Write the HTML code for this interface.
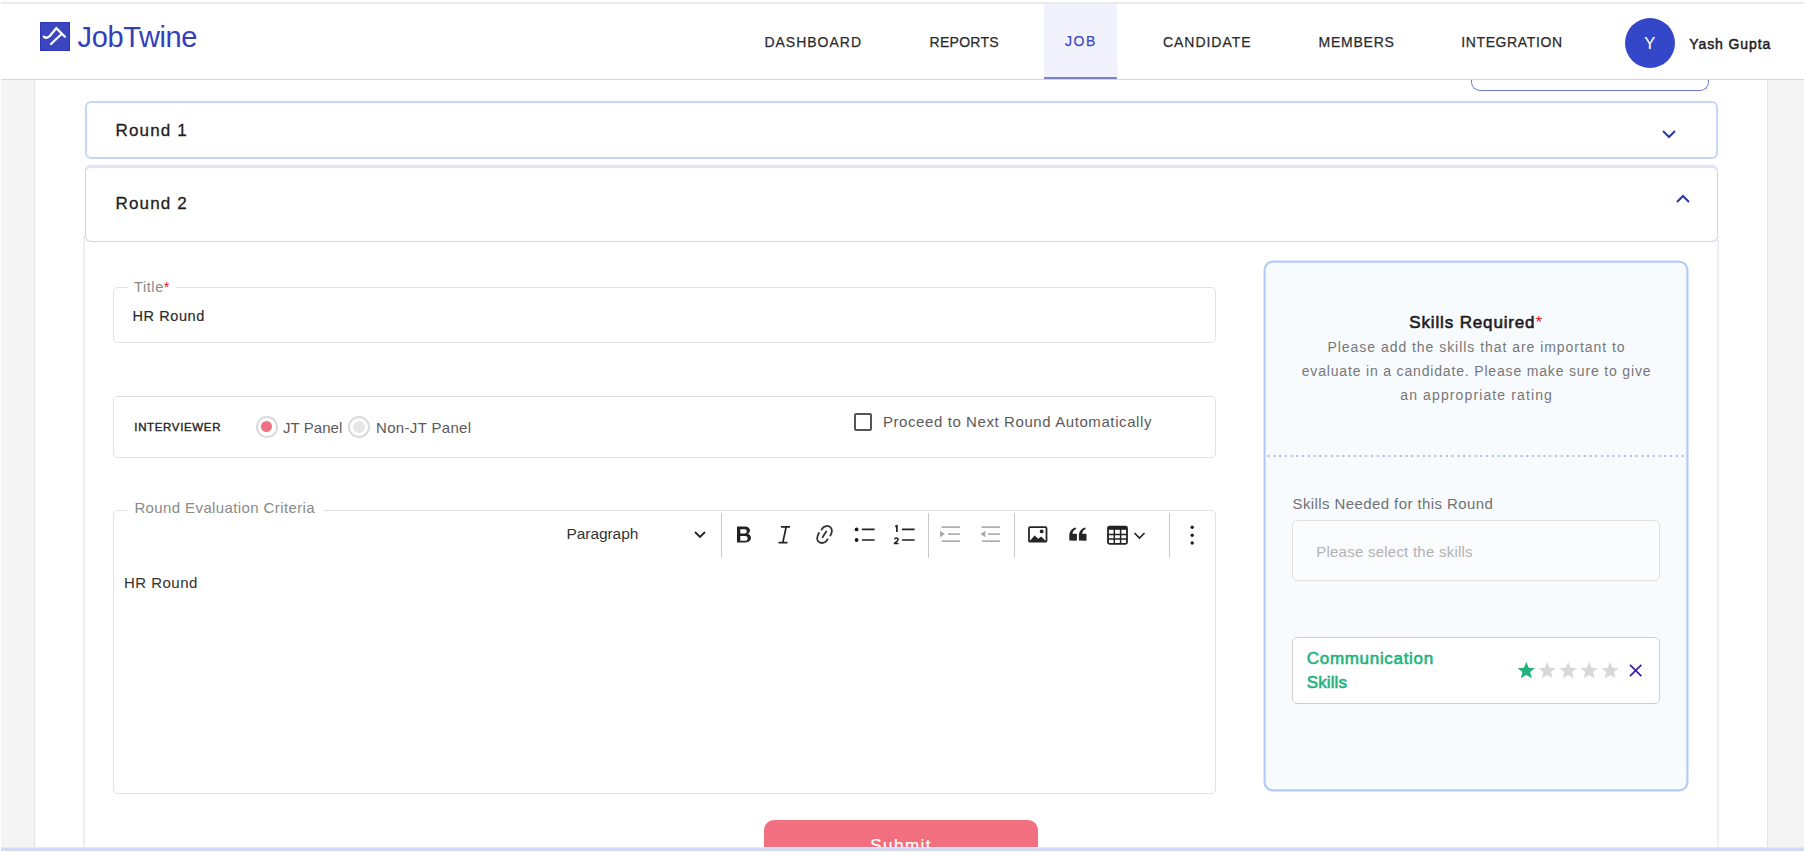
<!DOCTYPE html>
<html><head><meta charset="utf-8">
<style>
*{box-sizing:border-box;margin:0;padding:0}
html,body{width:1804px;height:852px;overflow:hidden;background:#fff;font-family:"Liberation Sans",sans-serif}
.a{position:absolute}
.t{position:absolute;white-space:nowrap;line-height:1}
</style></head><body>
<div class="a" style="left:1px;top:80px;width:34px;height:767px;background:#f4f4f4;border-right:1px solid #e4e4e4"></div>
<div class="a" style="left:1767px;top:80px;width:37px;height:768px;background:#f4f4f4;border-left:1px solid #e4e4e4"></div>
<div class="a" style="left:1471px;top:70px;width:238px;height:21px;border:1.5px solid #6f79cf;border-top:none;border-radius:0 0 9px 9px"></div>
<div class="a" style="left:1px;top:2px;width:1803px;height:78px;background:#fff;border-top:2px solid #ebebeb;border-bottom:1px solid #d6d6d6"></div>
<div class="a" style="left:1044px;top:4px;width:73px;height:75px;background:#f2f2fd;border-bottom:2px solid #7c84c8"></div>
<div class="a" style="left:40px;top:22px;width:29.5px;height:29px;background:#3a45bf;box-shadow:inset 0 0 0 1px #2a37b8"></div>
<svg class="a" style="left:40.3px;top:22px" width="29" height="29" viewBox="0 0 29 29">
  <path d="M3.8 14.8 C6 16.4 8 15.8 9.8 14 L16.3 6.2 L25 14.8" fill="none" stroke="#fff" stroke-width="2.3" stroke-linecap="round" stroke-linejoin="miter"/>
  <path d="M11 22 L20.6 13" fill="none" stroke="#fff" stroke-width="2.3" stroke-linecap="round"/>
</svg>
<div class="t" style="left:77.5px;top:23.13px;font-size:29px;color:#3340bb;letter-spacing:-0.36px">JobTwine</div>
<div class="t" style="left:764.4px;top:34.72px;font-size:14px;color:#2b2b2b;letter-spacing:0.99px;-webkit-text-stroke:0.25px #2b2b2b">DASHBOARD</div>
<div class="t" style="left:929.6px;top:34.72px;font-size:14px;color:#2b2b2b;letter-spacing:0.25px;-webkit-text-stroke:0.25px #2b2b2b">REPORTS</div>
<div class="t" style="left:1065px;top:34.12px;font-size:14px;color:#3d4ac4;letter-spacing:1.6px;-webkit-text-stroke:0.25px #3d4ac4">JOB</div>
<div class="t" style="left:1163px;top:34.72px;font-size:14px;color:#2b2b2b;letter-spacing:0.96px;-webkit-text-stroke:0.25px #2b2b2b">CANDIDATE</div>
<div class="t" style="left:1318.5px;top:34.72px;font-size:14px;color:#2b2b2b;letter-spacing:0.77px;-webkit-text-stroke:0.25px #2b2b2b">MEMBERS</div>
<div class="t" style="left:1461.2px;top:34.72px;font-size:14px;color:#2b2b2b;letter-spacing:0.63px;-webkit-text-stroke:0.25px #2b2b2b">INTEGRATION</div>
<div class="a" style="left:1625px;top:17.5px;width:50px;height:50px;border-radius:50%;background:#3447c9"></div>
<div class="t" style="left:1644.3px;top:35.45px;font-size:16.5px;color:#fff;letter-spacing:0px;-webkit-text-stroke:0.1px #fff">Y</div>
<div class="t" style="left:1689.3px;top:36.62px;font-size:14px;color:#1e1e1e;letter-spacing:0.9px;-webkit-text-stroke:0.5px #1e1e1e">Yash Gupta</div>
<div class="a" style="left:1px;top:79px;width:1803px;height:1px;background:#d6d6d6"></div>
<div class="a" style="left:85px;top:101px;width:1633px;height:58px;border:2px solid #c6d7f6;border-radius:6px;background:#fff"></div>
<div class="t" style="left:115.5px;top:121.6px;font-size:17px;color:#1e1e1e;letter-spacing:1.15px;-webkit-text-stroke:0.3px #1e1e1e">Round 1</div>
<svg class="a" style="left:1660px;top:128px" width="18" height="12" viewBox="0 0 18 12"><path d="M3 3 L9 9 L15 3" fill="none" stroke="#2a36b0" stroke-width="2"/></svg>
<div class="a" style="left:83px;top:236px;width:1636px;height:616px;border-left:2px solid #eeeeee;border-right:2px solid #eeeeee"></div>
<div class="a" style="left:85px;top:166px;width:1633px;height:76px;border:1.5px solid #c6d7f6;border-top:2px solid #dde6f6;border-radius:6px;background:#fff;box-shadow:0 -1.5px 0 #e8e8e8"></div>
<div class="t" style="left:115.5px;top:194.5px;font-size:17px;color:#1e1e1e;letter-spacing:1.15px;-webkit-text-stroke:0.3px #1e1e1e">Round 2</div>
<svg class="a" style="left:1674px;top:193px" width="18" height="12" viewBox="0 0 18 12"><path d="M3 9 L9 3 L15 9" fill="none" stroke="#2a36b0" stroke-width="2"/></svg>
<div class="a" style="left:113px;top:287px;width:1103px;height:56px;border:1px solid #e2e2e2;border-radius:5px"></div>
<div class="a" style="left:128px;top:284px;width:48px;height:6px;background:#fff"></div>
<div class="t" style="left:134px;top:279.76px;font-size:14.5px;color:#8a8a8a;letter-spacing:0.6px">Title<span style="color:#e0202e">*</span></div>
<div class="t" style="left:132.4px;top:308.76px;font-size:14.5px;color:#2a2a2a;letter-spacing:0.61px;-webkit-text-stroke:0.15px #2a2a2a">HR Round</div>
<div class="a" style="left:113px;top:396px;width:1103px;height:62px;border:1px solid #e2e2e2;border-radius:5px"></div>
<div class="t" style="left:134.3px;top:421.98px;font-size:11.5px;color:#262626;letter-spacing:0.65px;-webkit-text-stroke:0.4px #262626">INTERVIEWER</div>
<div class="a" style="left:256px;top:416px;width:21.5px;height:21.5px;border-radius:50%;border:2px solid #dadada;background:#fff"></div>
<div class="a" style="left:261px;top:421.2px;width:11.2px;height:11.2px;border-radius:50%;background:#f06f81"></div>
<div class="t" style="left:283px;top:419.61px;font-size:15px;color:#5a5a5a;letter-spacing:0.06px">JT Panel</div>
<div class="a" style="left:348px;top:416px;width:22px;height:22px;border-radius:50%;border:2px solid #dadada;background:#fff"></div>
<div class="a" style="left:353.2px;top:420.8px;width:12px;height:12px;border-radius:50%;background:#e6e6e6"></div>
<div class="t" style="left:376px;top:419.61px;font-size:15px;color:#5a5a5a;letter-spacing:0.33px">Non-JT Panel</div>
<div class="a" style="left:854px;top:413px;width:18px;height:18px;border:2px solid #555;border-radius:2px"></div>
<div class="t" style="left:882.9px;top:413.61px;font-size:15px;color:#5a5a5a;letter-spacing:0.59px">Proceed to Next Round Automatically</div>
<div class="a" style="left:113px;top:510px;width:1103px;height:284px;border:1px solid #e2e2e2;border-radius:5px"></div>
<div class="a" style="left:127px;top:506px;width:196px;height:8px;background:#fff"></div>
<div class="t" style="left:134.4px;top:500.11px;font-size:15px;color:#8a8a8a;letter-spacing:0.39px">Round Evaluation Criteria</div>
<div class="t" style="left:566.5px;top:525.91px;font-size:15.5px;color:#333;letter-spacing:-0.07px">Paragraph</div>
<div class="t" style="left:124px;top:574.71px;font-size:15px;color:#333;letter-spacing:0.47px;-webkit-text-stroke:0.05px #333">HR Round</div>
<svg class="a" style="left:690px;top:528px" width="20" height="14" viewBox="0 0 20 14"><path d="M5 4 L10 9 L15 4" fill="none" stroke="#222" stroke-width="1.8"/></svg>
<div class="a" style="left:721px;top:513px;width:1px;height:45px;background:#c9c9c9"></div>
<div class="a" style="left:928px;top:513px;width:1px;height:45px;background:#c9c9c9"></div>
<div class="a" style="left:1014px;top:513px;width:1px;height:45px;background:#c9c9c9"></div>
<div class="a" style="left:1169px;top:513px;width:1px;height:45px;background:#c9c9c9"></div>
<!-- toolbar icons -->
<svg class="a" style="left:730px;top:520px" width="480" height="30" viewBox="730 520 480 30">
  <g fill="#222">
    <!-- Bold B -->
    <path d="M737 526.5 h8 c3.2 0 5 1.7 5 4 c0 1.6 -0.9 2.8 -2.3 3.3 c1.9 0.5 3.2 1.9 3.2 4 c0 2.8 -2.1 4.6 -5.4 4.6 h-8.5 z M740.3 529.3 v4.1 h4.2 c1.5 0 2.3 -0.8 2.3 -2 c0 -1.3 -0.8 -2.1 -2.3 -2.1 z M740.3 536.1 v4.6 h4.8 c1.6 0 2.5 -0.9 2.5 -2.3 c0 -1.4 -0.9 -2.3 -2.5 -2.3 z"/>
  </g>
  <!-- Italic I -->
  <path d="M781 526.8 h9 M778.5 542.6 h9 M786.2 526.8 l-3.4 15.8" fill="none" stroke="#222" stroke-width="1.7"/>
  <!-- link -->
  <g fill="none" stroke="#333" stroke-width="1.8" stroke-linecap="round">
    <path d="M821.6 529.6 C823.5 525.6 829 524.6 831.2 528.2 C832.6 530.6 831.6 533.4 830.3 535.6"/>
    <path d="M818.9 532.9 L817.6 536 C816.2 540 818.3 543 822 543 C824.6 543 826.6 541.2 827.6 539.2"/>
    <path d="M822.6 537.3 L826.2 531.6"/>
  </g>
  <!-- bullets -->
  <g fill="#1a1a1a">
    <circle cx="856.6" cy="529.4" r="1.9"/><circle cx="856.6" cy="540" r="1.9"/>
  </g>
  <g stroke="#222" stroke-width="1.6" stroke-linecap="round" fill="none">
    <path d="M862.5 529.4 h11.6 M862.5 540 h11.6 M902.6 529.4 h11.5 M902.6 540 h11.5"/>
    <path d="M895.2 526.6 L896.9 525.8 V532" stroke-width="1.7" stroke-linecap="butt"/>
    <path d="M894.7 539.3 C894.9 537.6 898.1 537.4 898.1 539.4 C898.1 540.7 895.6 542 894.5 543.5 H898.5" stroke-width="1.6" stroke-linecap="butt" stroke-linejoin="round"/>
  </g>
  <!-- indent / outdent (disabled gray) -->
  <g fill="#a8a8a8">
    <rect x="941.5" y="526.3" width="18.5" height="1.6"/><rect x="948" y="533.3" width="12" height="1.6"/><rect x="941.8" y="540.4" width="18.2" height="1.6"/>
    <path d="M940 530.8 l5 3.2 l-5 3.2 z"/>
    <rect x="981.5" y="526.3" width="18.5" height="1.6"/><rect x="988" y="533.3" width="12" height="1.6"/><rect x="981.8" y="540.4" width="18.2" height="1.6"/>
    <path d="M985.4 530.8 l-5 3.2 l5 3.2 z"/>
  </g>
  <!-- image -->
  <g>
    <rect x="1029" y="527.2" width="17.5" height="14.5" rx="1" fill="none" stroke="#252525" stroke-width="1.8"/>
    <path d="M1029.8 541 l4.8 -5.6 l3.6 3.4 l3 -2.2 l4.6 4.4 z" fill="#252525"/>
    <circle cx="1041.7" cy="531.4" r="1.9" fill="#252525"/>
  </g>
  <!-- quote -->
  <g fill="#252525">
    <path d="M1069.3 540.6 v-4.6 c0 -4.4 2.4 -7.4 6.3 -8.4 l0.6 1.5 c-2.4 1 -3.6 2.6 -3.6 4.6 h3.7 c0.4 0 0.6 0.3 0.6 0.7 v5.6 c0 0.4 -0.3 0.7 -0.7 0.7 z"/>
    <path d="M1078.9 540.6 v-4.6 c0 -4.4 2.4 -7.4 6.3 -8.4 l0.6 1.5 c-2.4 1 -3.6 2.6 -3.6 4.6 h3.7 c0.4 0 0.6 0.3 0.6 0.7 v5.6 c0 0.4 -0.3 0.7 -0.7 0.7 z"/>
  </g>
  <!-- table -->
  <g>
    <rect x="1108" y="526.6" width="19" height="17.2" rx="1.5" fill="none" stroke="#222" stroke-width="1.8"/>
    <rect x="1108" y="526.6" width="19" height="3.2" fill="#222"/>
    <path d="M1108 534.5 h19 M1108 539 h19 M1114.3 529 v14.5 M1120.6 529 v14.5" stroke="#222" stroke-width="1.5"/>
    <path d="M1134.5 533 l5 5 l5 -5" fill="none" stroke="#222" stroke-width="1.6"/>
  </g>
  <!-- more -->
  <g fill="#222"><circle cx="1192.2" cy="527.3" r="1.7"/><circle cx="1192.2" cy="535.3" r="1.7"/><circle cx="1192.2" cy="543" r="1.7"/></g>
</svg>
<svg class="a" style="left:1263px;top:260px" width="426" height="532" viewBox="0 0 426 532"><rect x="1.6" y="1.6" width="422.8" height="528.8" rx="8.5" fill="#f8fbfe" stroke="#b3cbf5" stroke-width="2.2"/></svg>
<div class="t" style="left:1409.3px;top:314.45px;font-size:17px;color:#1e1e1e;letter-spacing:0.85px;-webkit-text-stroke:0.6px #1e1e1e">Skills Required<span style="color:#e0202e;-webkit-text-stroke:0">*</span></div>
<div class="t" style="left:1327.5px;top:340.02px;font-size:14px;color:#777;letter-spacing:0.96px">Please add the skills that are important to</div>
<div class="t" style="left:1301.7px;top:363.77px;font-size:14px;color:#777;letter-spacing:0.83px">evaluate in a candidate. Please make sure to give</div>
<div class="t" style="left:1400.3px;top:387.57px;font-size:14px;color:#777;letter-spacing:1.12px">an appropriate rating</div>
<svg class="a" style="left:1266px;top:454px" width="422" height="4" viewBox="0 0 422 4"><line x1="1.5" y1="2" x2="421" y2="2" stroke="#a6c3f2" stroke-width="2.1" stroke-dasharray="2.1 3.65"/></svg>
<div class="t" style="left:1292.5px;top:495.51px;font-size:15px;color:#717171;letter-spacing:0.41px">Skills Needed for this Round</div>
<div class="a" style="left:1292px;top:520px;width:368px;height:61px;border:1px solid #e0e0e0;border-radius:5px;background:#f9fbfd"></div>
<div class="t" style="left:1316.2px;top:544.01px;font-size:15px;color:#b2b2b2;letter-spacing:0.24px">Please select the skills</div>
<div class="a" style="left:1292px;top:637px;width:368px;height:67px;border:1.5px solid #cfcfcf;border-radius:5px;background:#fff"></div>
<div class="t" style="left:1306.8px;top:649.6px;font-size:17px;color:#22b27d;letter-spacing:0.69px;-webkit-text-stroke:0.6px #22b27d">Communication</div>
<div class="t" style="left:1306.8px;top:674.0px;font-size:17px;color:#22b27d;letter-spacing:0.1px;-webkit-text-stroke:0.6px #22b27d">Skills</div>
<svg class="a" style="left:1515px;top:660px" width="110" height="22" viewBox="0 0 110 22">
  <defs><path id="st" d="M0 -8.9 L2.4 -3.1 L8.7 -2.7 L3.9 1.3 L5.4 7.5 L0 4.1 L-5.4 7.5 L-3.9 1.3 L-8.7 -2.7 L-2.4 -3.1 Z"/></defs>
  <use href="#st" x="11.3" y="10.8" fill="#23b27c"/>
  <use href="#st" x="32.2" y="10.8" fill="#d8d8d8"/>
  <use href="#st" x="53.2" y="10.8" fill="#d8d8d8"/>
  <use href="#st" x="74.2" y="10.8" fill="#d8d8d8"/>
  <use href="#st" x="95.1" y="10.8" fill="#d8d8d8"/>
</svg>
<svg class="a" style="left:1627px;top:662px" width="18" height="18" viewBox="0 0 18 18"><path d="M3 2.8 L14.4 14.2 M14.4 2.8 L3 14.2" stroke="#3322ae" stroke-width="1.7"/></svg>
<div class="a" style="left:764px;top:820px;width:274px;height:40px;border-radius:10px;background:#f26f80"></div>
<div class="t" style="left:870.2px;top:836.65px;font-size:17px;color:#fff;letter-spacing:1.5px;-webkit-text-stroke:0.2px #fff">Submit</div>
<div class="a" style="left:1px;top:848px;width:1803px;height:3px;background:#d1dbf2;box-shadow:0 -1px 0 #e3e9f7"></div>
<div class="a" style="left:0;top:851px;width:1804px;height:1px;background:#fff"></div>
</body></html>
